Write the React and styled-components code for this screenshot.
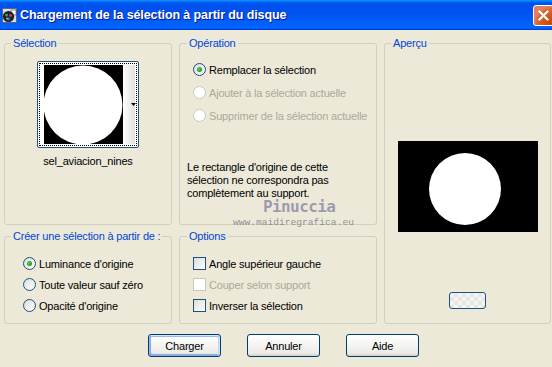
import React from "react";
import styled, { createGlobalStyle } from "styled-components";

const Global = createGlobalStyle`
  html, body { margin: 0; padding: 0; background: #ECE9D8; }
  body { width: 552px; height: 367px; overflow: hidden; }
  * { box-sizing: border-box; }
`;

const Window = styled.div`
  position: relative;
  width: 552px;
  height: 367px;
  background: #ECE9D8;
  overflow: hidden;
  font-family: "Liberation Sans", Arial, sans-serif;
  font-size: 11px;
  letter-spacing: -0.2px;
  color: #000;
`;

const TitleBar = styled.div`
  height: 30px;
  display: flex;
  align-items: center;
  padding-left: 2px;
  background: linear-gradient(to bottom, #0997ff 0%, #0053ee 10%, #0050ee 40%, #0062fc 85%, #0066ff 92%, #005bff 95%, #003dd7 97%, #003dd7 100%);
`;

const TitleText = styled.div`
  margin-left: 3px;
  font-family: "Liberation Sans", Arial, sans-serif;
  font-weight: bold;
  font-size: 12.5px;
  color: #fff;
  text-shadow: 1px 1px 0 #0a1883;
  letter-spacing: -0.1px;
  flex: 1;
`;

const CloseBtn = styled.div`
  width: 21px;
  height: 21px;
  margin-right: -2px;
  border: 1px solid #fff;
  border-radius: 3px;
  background: radial-gradient(circle at 90% 90%, #cc4600 0%, #dc6527 55%, #e08063 70%, #e27c5b 100%);
  display: flex;
  align-items: center;
  justify-content: center;
`;

const Body = styled.div`
  padding: 7px 1px 0 4px;
`;

const Panels = styled.div`
  display: grid;
  grid-template-columns: 168px 198px 167px;
  grid-template-rows: 188px 94px;
  column-gap: 7px;
  row-gap: 5px;
`;

const Frame = styled.fieldset`
  margin: 0;
  padding: 0;
  min-width: 0;
  border: 1px solid #D0D0BF;
  border-radius: 3px;
  grid-column: ${(p) => p.$col};
  grid-row: ${(p) => p.$row};
  display: flex;
  flex-direction: column;
  align-items: ${(p) => (p.$center ? "center" : "stretch")};
  padding-top: ${(p) => p.$pt || 0}px;
  padding-left: ${(p) => p.$pl || 0}px;
`;

const Legend = styled.legend`
  font-size: 11px;
  line-height: 13px;
  color: #0046D5;
  padding: 0 2px;
  margin-left: ${(p) => p.$ml || 6}px;
`;

const Thumb = styled.div`
  margin-top: 11px;
  width: 102px;
  height: 87px;
  border: 1px solid #1C5180;
  border-radius: 2px;
  background: #fff;
  padding: 1px;
`;

const Focus = styled.div`
  width: 100%;
  height: 100%;
  border: 1px dotted #000;
  display: flex;
`;

const Caption = styled.div`
  margin-top: 7px;
  line-height: 13px;
`;

const Row = styled.label`
  display: flex;
  align-items: center;
  height: ${(p) => p.$h}px;
  color: ${(p) => (p.$disabled ? "#ACA899" : "#000")};
  gap: 3px;
`;

const Radio = styled.span`
  position: relative;
  width: 13px;
  height: 13px;
  border-radius: 50%;
  border: 1px solid ${(p) => (p.$disabled ? "#CAC8BB" : "#1C5180")};
  background: ${(p) => (p.$disabled ? "#fff" : "linear-gradient(135deg, #DCDCD7 0%, #fff 100%)")};
  flex: none;
  &::after {
    content: "";
    display: ${(p) => (p.$checked ? "block" : "none")};
    position: absolute;
    left: 3px;
    top: 3px;
    width: 5px;
    height: 5px;
    border-radius: 50%;
    background: radial-gradient(circle at 40% 40%, #55d35a 0%, #21a121 60%, #1a8a1a 100%);
  }
`;

const Check = styled.span`
  width: 13px;
  height: 13px;
  border: 1px solid ${(p) => (p.$disabled ? "#CAC8BB" : "#1C5180")};
  background: ${(p) => (p.$disabled ? "#fff" : "linear-gradient(135deg, #DCDCD7 0%, #fff 100%)")};
  flex: none;
`;

const Note = styled.p`
  margin: 34px 0 0 ${(p) => p.$ml || 0}px;
  line-height: 13px;
`;

const Preview = styled.div`
  margin-top: 91px;
  width: 140px;
  height: 91px;
  background: #000;
  display: flex;
`;

const MiniBtn = styled.div`
  margin-top: 60px;
  width: 37px;
  height: 17px;
  border: 1px solid #1C5180;
  border-radius: 3px;
  background-color: #f4f4f2;
  background-image:
    linear-gradient(45deg, #e6e6e2 25%, transparent 25%, transparent 75%, #e6e6e2 75%),
    linear-gradient(45deg, #e6e6e2 25%, transparent 25%, transparent 75%, #e6e6e2 75%);
  background-size: 8px 8px;
  background-position: 0 0, 4px 4px;
`;

const ButtonRow = styled.div`
  display: flex;
  gap: 26px;
  padding-left: 144px;
  margin-top: 10px;
`;

const Button = styled.button`
  width: 73px;
  height: 23px;
  padding: 0;
  font-family: "Liberation Sans", Arial, sans-serif;
  font-size: 11px;
  letter-spacing: -0.2px;
  color: #000;
  border: 1px solid #003C74;
  border-radius: 3px;
  background: linear-gradient(180deg, #fff 0%, #ECEBE6 86%, #D6D0C5 100%);
  box-shadow: ${(p) =>
    p.$default
      ? "inset -1px 1px #cee7ff, inset 1px 2px #98b8ea, inset -2px 2px #bcd4f6, inset 1px -1px #89ade4, inset 2px -2px #89ade4"
      : "none"};
`;

const Watermark = styled.div`
  position: absolute;
  left: ${(p) => p.$x}px;
  top: ${(p) => p.$y}px;
  font-family: ${(p) => p.$font};
  font-size: ${(p) => p.$size}px;
  font-weight: ${(p) => p.$weight || "normal"};
  letter-spacing: ${(p) => p.$ls || 0}px;
  color: ${(p) => p.$color};
  line-height: ${(p) => p.$lh}px;
  white-space: nowrap;
  pointer-events: none;
`;

function TitleIcon() {
  return (
    <svg width="15" height="15" viewBox="0 0 15 15">
      <rect x="0.5" y="0.5" width="14" height="14" fill="#d8dde6" stroke="#5a6680" />
      <rect x="9" y="2" width="5" height="5" fill="#ffffff" stroke="#3a4660" strokeWidth="0.6" />
      <circle cx="6.5" cy="8.5" r="5.6" fill="#1a1e26" />
      <circle cx="4.5" cy="7" r="1.6" fill="#2aa83c" />
      <circle cx="8.5" cy="7.5" r="1.4" fill="#c43a8a" />
      <circle cx="6.5" cy="11" r="1.4" fill="#2f7fd8" />
      <circle cx="5" cy="10.5" r="0.9" fill="#e0c040" />
    </svg>
  );
}

function ThumbImage() {
  return (
    <svg width="96" height="81" viewBox="0 0 96 81">
      <defs>
        <clipPath id="imgclip">
          <rect x="4" y="1" width="79" height="79" />
        </clipPath>
        <linearGradient id="strip" x1="0" x2="1" y1="0" y2="0">
          <stop offset="0" stopColor="#ffffff" />
          <stop offset="1" stopColor="#e0e0dc" />
        </linearGradient>
      </defs>
      <rect x="0" y="0" width="96" height="81" fill="#fff" />
      <rect x="4" y="1" width="79" height="79" fill="#000" />
      <circle cx="43" cy="41" r="39.5" fill="#fff" clipPath="url(#imgclip)" />
      <rect x="83" y="1" width="12" height="79" fill="url(#strip)" />
      <path d="M91 39 L96 39 L93.5 42 Z" fill="#000" />
    </svg>
  );
}

function PreviewImage() {
  return (
    <svg width="140" height="91" viewBox="0 0 140 91">
      <rect width="140" height="91" fill="#000" />
      <circle cx="67" cy="48" r="36" fill="#fff" />
    </svg>
  );
}

export default function App() {
  return (
    <Window>
      <Global />
      <TitleBar>
        <TitleIcon />
        <TitleText>Chargement de la sélection à partir du disque</TitleText>
        <CloseBtn>
          <svg width="13" height="13" viewBox="0 0 13 13">
            <path d="M2.5 2.5 L10.5 10.5 M10.5 2.5 L2.5 10.5" stroke="#fff" strokeWidth="2.2" strokeLinecap="square" />
          </svg>
        </CloseBtn>
      </TitleBar>
      <Body>
        <Panels>
          <Frame $col="1" $row="1" $center>
            <Legend>Sélection</Legend>
            <Thumb>
              <Focus>
                <ThumbImage />
              </Focus>
            </Thumb>
            <Caption>sel_aviacion_nines</Caption>
          </Frame>

          <Frame $col="2" $row="1" $pt={8} $pl={13}>
            <Legend $ml={-6}>Opération</Legend>
            <Row $h={23}>
              <Radio $checked />
              Remplacer la sélection
            </Row>
            <Row $h={23} $disabled>
              <Radio $disabled />
              Ajouter à la sélection actuelle
            </Row>
            <Row $h={23} $disabled>
              <Radio $disabled />
              Supprimer de la sélection actuelle
            </Row>
            <Note $ml={-6}>
              Le rectangle d'origine de cette
              <br />
              sélection ne correspondra pas
              <br />
              complètement au support.
            </Note>
          </Frame>

          <Frame $col="3" $row="1 / span 2" $center>
            <Legend>Aperçu</Legend>
            <Preview>
              <PreviewImage />
            </Preview>
            <MiniBtn />
          </Frame>

          <Frame $col="1" $row="2" $pt={10} $pl={18}>
            <Legend $ml={-12}>Créer une sélection à partir de :</Legend>
            <Row $h={21}>
              <Radio $checked />
              Luminance d'origine
            </Row>
            <Row $h={21}>
              <Radio />
              Toute valeur sauf zéro
            </Row>
            <Row $h={21}>
              <Radio />
              Opacité d'origine
            </Row>
          </Frame>

          <Frame $col="2" $row="2" $pt={10} $pl={13}>
            <Legend $ml={-6}>Options</Legend>
            <Row $h={21}>
              <Check />
              Angle supérieur gauche
            </Row>
            <Row $h={21} $disabled>
              <Check $disabled />
              Couper selon support
            </Row>
            <Row $h={21}>
              <Check />
              Inverser la sélection
            </Row>
          </Frame>
        </Panels>
        <ButtonRow>
          <Button $default>Charger</Button>
          <Button>Annuler</Button>
          <Button>Aide</Button>
        </ButtonRow>
      </Body>
      <Watermark $x={263} $y={201} $lh={12} $font='"DejaVu Sans Mono", monospace' $size={16} $weight="bold" $ls={-0.6} $color="rgba(130,130,160,0.75)">
        Pinuccia
      </Watermark>
      <Watermark $x={233} $y={217} $lh={11} $font='"Liberation Mono", monospace' $size={9.6} $color="rgba(120,120,135,0.8)">
        www.maidiregrafica.eu
      </Watermark>
    </Window>
  );
}
